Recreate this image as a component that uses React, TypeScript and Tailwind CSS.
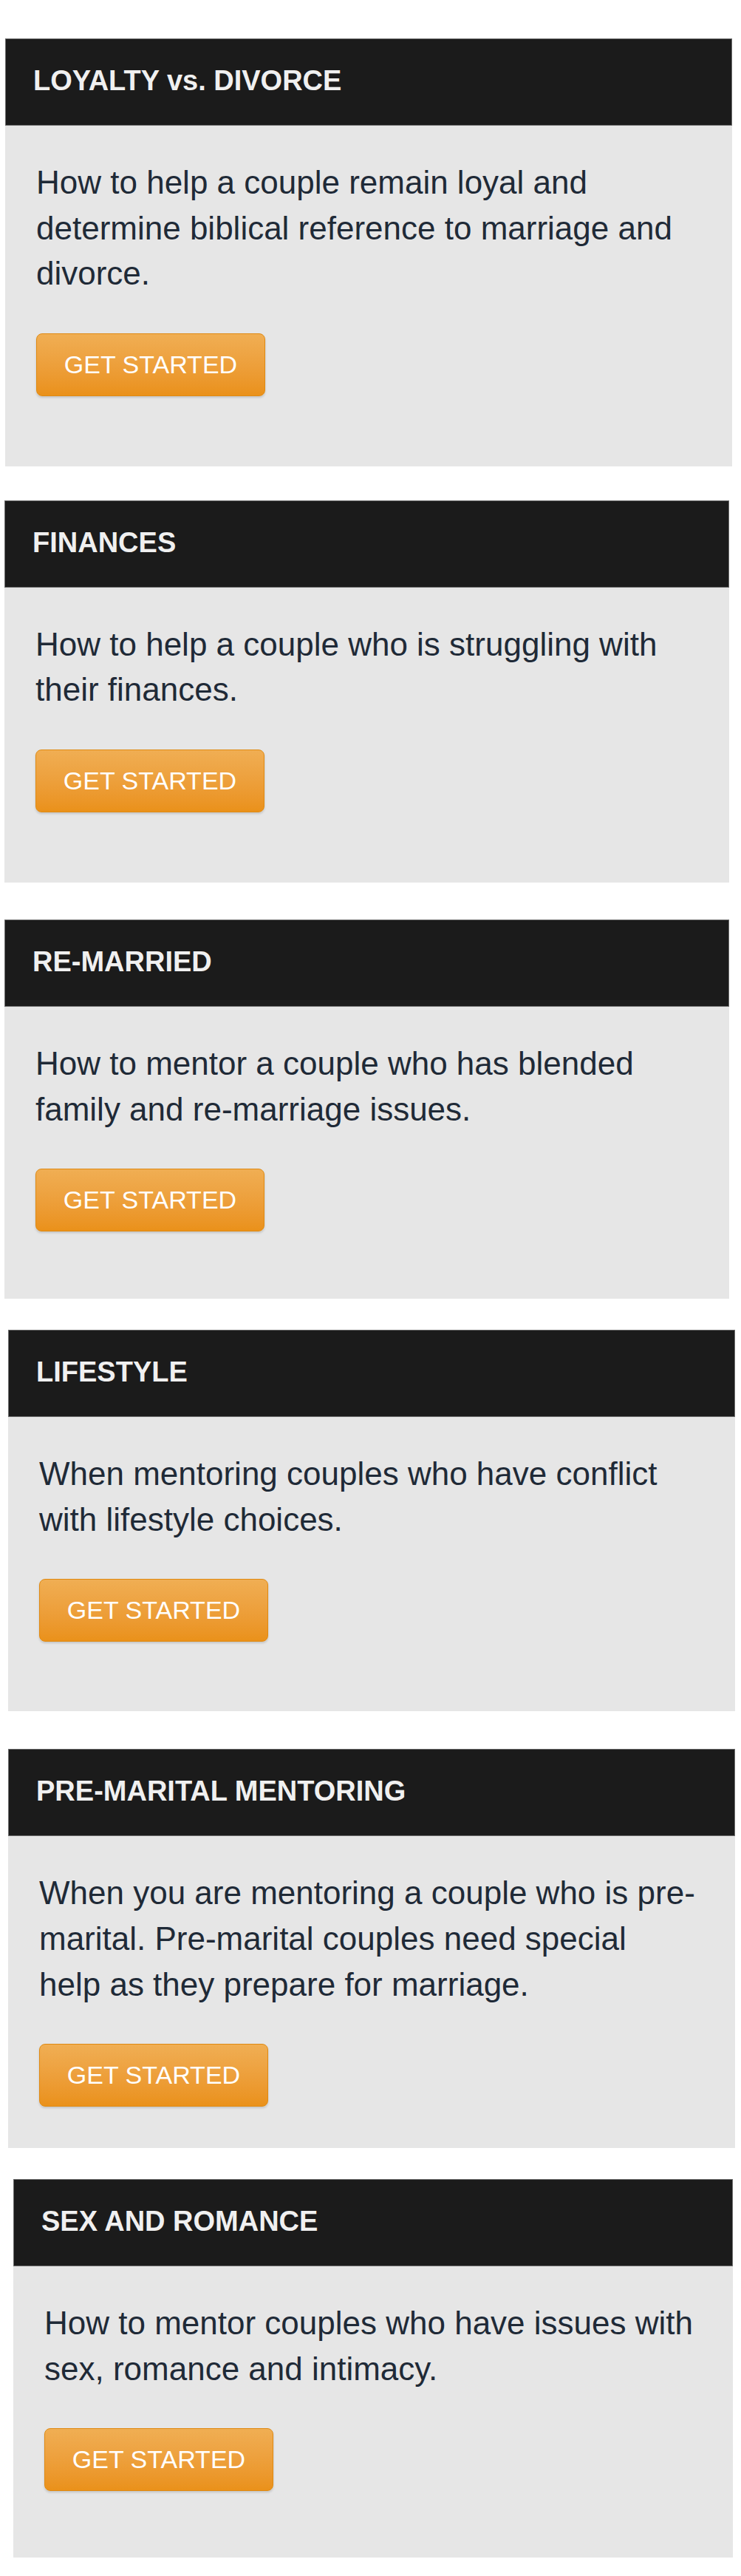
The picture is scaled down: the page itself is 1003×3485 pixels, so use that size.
import type { ReactNode } from "react";

type Card = {
  title: string;
  text: ReactNode;
  wrap: string;
  pb: string;
};

const cards: Card[] = [
  {
    title: "LOYALTY vs. DIVORCE",
    text: "How to help a couple remain loyal and determine biblical reference to marriage and divorce.",
    wrap: "mt-[52px] ml-[7px] w-[984px]",
    pb: "pb-[95px]",
  },
  {
    title: "FINANCES",
    text: "How to help a couple who is struggling with their finances.",
    wrap: "mt-[46px] ml-[6px] w-[981px]",
    pb: "pb-[95px]",
  },
  {
    title: "RE-MARRIED",
    text: "How to mentor a couple who has blended family and re-marriage issues.",
    wrap: "mt-[50px] ml-[6px] w-[981px]",
    pb: "pb-[91px]",
  },
  {
    title: "LIFESTYLE",
    text: "When mentoring couples who have conflict with lifestyle choices.",
    wrap: "mt-[42px] ml-[11px] w-[984px]",
    pb: "pb-[94px]",
  },
  {
    title: "PRE-MARITAL MENTORING",
    text: (
      <>
        When you are mentoring a couple who is pre-marital. Pre-marital couples need special
        <br />
        help as they prepare for marriage.
      </>
    ),
    wrap: "mt-[51px] ml-[11px] w-[984px]",
    pb: "pb-[56px]",
  },
  {
    title: "SEX AND ROMANCE",
    text: "How to mentor couples who have issues with sex, romance and intimacy.",
    wrap: "mt-[42px] ml-[18px] w-[974px]",
    pb: "pb-[90px]",
  },
];

function TopicCard({ title, text, wrap, pb }: Card) {
  return (
    <section className={`${wrap} bg-[#e6e6e6]`}>
      <header className="flex h-[118px] items-center border border-[#6b6b6b] bg-[#1b1b1b] pb-[4px] pl-[37px]">
        <h2 className="text-[38px] font-bold leading-none text-[#f0f0f0]">{title}</h2>
      </header>
      <div className={`px-[42px] pt-[46px] ${pb}`}>
        <p className="text-[44px] leading-[1.4] text-[#1f2a37]">{text}</p>
        <button
          type="button"
          className="mt-[50px] flex h-[85px] w-[310px] items-center justify-center rounded-[8px] border border-[#e08a12] bg-gradient-to-b from-[#f0ae53] to-[#ea9119] text-[34px] text-white shadow-[0_2px_3px_rgba(0,0,0,0.15)]"
        >
          GET STARTED
        </button>
      </div>
    </section>
  );
}

export default function App() {
  return (
    <div className="min-h-[3485px] bg-white [font-family:'Liberation_Sans',Arial,sans-serif]">
      <div className="flex flex-col">
        {cards.map((c) => (
          <TopicCard key={c.title} {...c} />
        ))}
      </div>
    </div>
  );
}
